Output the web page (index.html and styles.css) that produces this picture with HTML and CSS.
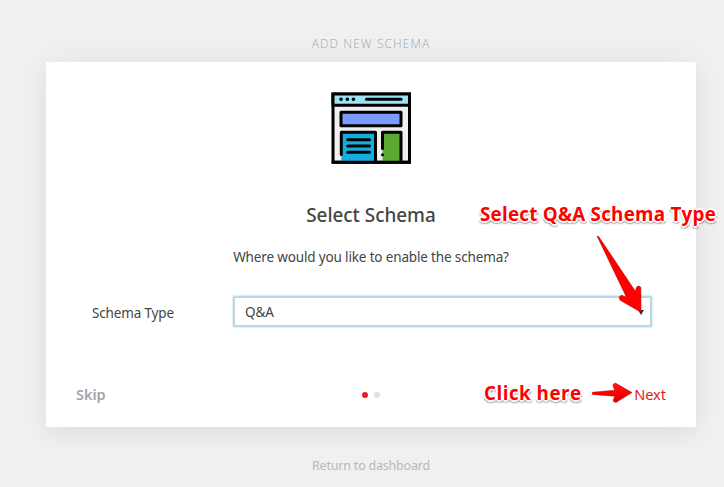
FILE: index.html
```html
<!DOCTYPE html>
<html lang="en">

<head>
  <meta charset="UTF-8">
  <meta name="viewport" content="width=device-width, initial-scale=1.0">
  <title>Add New Schema</title>
  <link rel="stylesheet" href="styles.css">
</head>

<body>
  <div class="wizard">
    <h1 class="title"><span>ADD NEW SCHEMA</span></h1>
    <div class="card">
      <svg class="icon" width="80" height="72" viewBox="0 0 80 72" fill="none" stroke="#000" stroke-width="3" stroke-linecap="round" stroke-linejoin="round">
        <path d="M2 2h76.5v68.2H2z" fill="#f1eff0" stroke-linejoin="miter" />
        <path d="M2 2h76.5v11.2H2z" fill="#9be3f5" stroke-linejoin="miter" />
        <path d="M10 7.3h.1M16.3 7.3h.1M22.4 7.3h.1" stroke-width="3.6" />
        <path d="M35.5 7.3h34.5" />
        <path d="M10 20.2h60v13.6H10z" fill="#7b9cff" />
        <path d="M10.3 40.2h34.2v30H10.3z" fill="#14addf" stroke="none" />
        <path d="M10.3 62.5V40.2h34.2v30" />
        <path d="M51.5 40.2H70v30H51.5z" fill="#5aaa32" stroke="none" />
        <path d="M51.5 56.5V40.2H70v30M51.5 62.7v.1" />
        <path d="M16.7 47.8h21.8M16.7 54h21.8M16.7 60.2h21.8" />
        <path d="M2 70.2h76.5" />
      </svg>
      <h2><span>Select Schema</span></h2>
      <p class="question"><span>Where would you like to enable the schema?</span></p>
      <div class="field">
        <label>Schema Type</label>
        <div class="select">
          <span>Q&amp;A</span>
          <i class="caret"></i>
        </div>
      </div>
      <div class="footer">
        <a class="skip">Skip</a>
        <div class="dots">
          <span class="current"></span>
          <span></span>
        </div>
        <a class="next">Next</a>
      </div>
    </div>
    <a class="return"><span>Return to dashboard</span></a>
  </div>

  <!-- notes over the form -->
  <div class="note note-select">Select Q&amp;A Schema Type</div>
  <div class="note note-next">Click here</div>
  <svg class="arrows" width="724" height="487" viewBox="0 0 724 487">
    <defs>
      <linearGradient id="red" x1="0" y1="0" x2="0" y2="1">
        <stop offset="0" stop-color="#ff1a1a" />
        <stop offset=".5" stop-color="#ff0000" />
        <stop offset="1" stop-color="#d80000" />
      </linearGradient>
    </defs>
    <path fill="#fe0000" stroke="#b80000" stroke-width=".6" stroke-linejoin="round" d="M597.2 236.3Q598 235.8 599 237L635.5 291.5L636.3 287.5Q638.2 284.5 640.8 287.2L641 312.3L620.2 300.2Q617.8 296.5 621.5 295.3L626.5 297.3Z" />
    <path fill="url(#red)" stroke="#a80000" stroke-width=".5" stroke-linejoin="round" d="M592.3 392.3L614.8 390.2L613 386Q613 382.6 616.3 383.6L632 392.5L616.3 402.3Q612.8 402.4 613.3 399.4L615 396.3L592.3 394.4Z" />
  </svg>
</body>

</html>
```
FILE: styles.css
```css
* {
  box-sizing: border-box;
}

body {
  margin: 0;
  height: 487px;
  overflow: hidden;
  background: #f0f0f0;
  color: #444;
  font: 13.5px/20px "Noto Sans", "Open Sans", sans-serif;
  letter-spacing: -.15px;
}

.wizard {
  width: 650px;
  margin-left: 46px;
  padding-top: 34px;
  text-align: center;
}

.title {
  margin: 0;
  height: 28px;
  color: #a0a5aa;
  font: 300 12px/20px "Open Sans", sans-serif;
  letter-spacing: 1.1px;
}

.card {
  height: 365px;
  padding: 30px 30px 0;
  background: #fff;
  box-shadow: 0 10px 20px rgba(0, 0, 0, .04), 0 0 30px rgba(0, 0, 0, .05);
}

.icon {
  display: block;
  margin: 0 auto;
}

h2 {
  margin: 37px 0 0;
  font: 500 18.9px/28px "Noto Sans", sans-serif;
  letter-spacing: 0;
}

.question {
  margin: 18px 0 0;
}

.field {
  display: flex;
  align-items: center;
  height: 32px;
  margin-top: 28px;
  padding-left: 16px;
  text-align: left;
}

.field label {
  width: 142px;
  padding-top: 4px;
}

.select {
  display: flex;
  align-items: center;
  justify-content: space-between;
  width: 417px;
  height: 29px;
  padding: 2px 6px 0 10px;
  border: 1px solid #c3d0d5;
  box-shadow: 0 0 2px 1px #94cde3;
}

.caret {
  border: 3px solid transparent;
  border-top: 5px solid #333;
  border-bottom: 0;
}

.footer {
  display: flex;
  align-items: center;
  justify-content: space-between;
  margin-top: 57px;
  font-size: 14.5px;
  letter-spacing: 0;
}

.skip {
  width: 60px;
  color: #a0a5aa;
  font-weight: 600;
  text-align: left;
}

.dots {
  display: flex;
  gap: 6px;
  padding-top: 1px;
}

.dots span {
  width: 6px;
  height: 6px;
  border-radius: 50%;
  background: #e1e1e1;
}

.dots .current {
  background: #ed1c24;
}

.next {
  width: 60px;
  color: #dc1c1c;
  text-align: right;
}

.return {
  display: block;
  margin-top: 29px;
  color: #b4b9be;
  font-size: 12.4px;
}

.note {
  position: absolute;
  color: #f00;
  font: 700 18.8px/24px "Open Sans", sans-serif;
  letter-spacing: .25px;
  white-space: nowrap;
  text-shadow: 1px 1px #fff, -1px -1px #fff, 1px -1px #fff, -1px 1px #fff, 2px 0 #fff, -2px 0 #fff, 0 2px #fff, 0 -2px #fff, 1px 2px 2px #444, -1px 2px 2px #777;
}

.note-select {
  left: 480px;
  top: 202px;
}

.note-next {
  left: 484px;
  top: 381px;
  letter-spacing: .5px;
}

.arrows {
  position: absolute;
  left: 0;
  top: 0;
}
```
